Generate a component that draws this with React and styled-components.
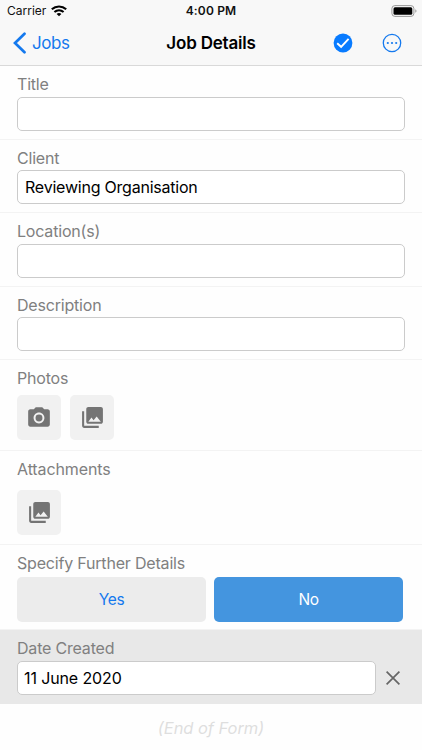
import React from "react";
import styled, { createGlobalStyle } from "styled-components";

const GlobalStyle = createGlobalStyle`
  * { box-sizing: border-box; }
  body { margin: 0; background: #fff; font-family: Inter, "Liberation Sans", sans-serif; }
  button { font: inherit; border: 0; padding: 0; margin: 0; background: none; }
`;

const Screen = styled.div`
  width: 422px;
  height: 750px;
  display: flex;
  flex-direction: column;
  overflow: hidden;
  background: #fefefe;
`;

const Header = styled.header`
  height: 66px;
  flex: none;
  background: #f8f8f8;
  border-bottom: 1px solid #d9d9d9;
`;

const StatusBar = styled.div`
  height: 21px;
  padding: 1px 5px 0 7px;
  display: grid;
  grid-template-columns: 1fr auto 1fr;
  align-items: center;
  font-size: 12px;
  line-height: 20px;
  color: #111;
`;

const Carrier = styled.div`
  display: flex;
  align-items: center;
  gap: 5px;
`;

const Clock = styled.div`
  margin-left: -2px;
  font-weight: 600;
  letter-spacing: 0.15px;
`;

const Battery = styled.svg`
  justify-self: end;
`;

const NavBar = styled.nav`
  height: 44px;
  padding: 0 12px;
  display: grid;
  grid-template-columns: 1fr auto 1fr;
  align-items: center;
`;

const BackButton = styled.button`
  display: flex;
  align-items: center;
  gap: 6px;
  font-size: 17px;
  letter-spacing: -0.4px;
  color: #1479ee;
`;

const NavTitle = styled.h1`
  margin: 0;
  font-size: 17px;
  font-weight: 600;
  letter-spacing: -0.2px;
  color: #000;
`;

const NavActions = styled.div`
  display: flex;
  justify-content: flex-end;
  gap: 29px;
  padding-right: 8px;
`;

const IconButton = styled.button`
  display: flex;
`;

const Field = styled.section`
  flex: none;
  height: ${(p) => p.$height}px;
  padding: 8px ${(p) => p.$right || 17}px 0 17px;
  border-bottom: ${(p) => (p.$active ? "0" : "1px solid #f3f3f3")};
  background: ${(p) => (p.$active ? "#e8e8e8" : "#fefefe")};
`;

const Label = styled.label`
  display: block;
  height: 20px;
  font-size: 16px;
  line-height: 20px;
  letter-spacing: ${(p) => p.$track || "-0.19px"};
  color: #808080;
  white-space: nowrap;
`;

const Controls = styled.div`
  display: flex;
  align-items: center;
  gap: ${(p) => p.$gap || 8}px;
  margin-top: ${(p) => p.$top || 2}px;
`;

const TextBox = styled.div`
  flex: 1;
  height: 34px;
  padding-left: 7px;
  border: 1px solid #cbcbcb;
  border-radius: 5px;
  background: #fff;
  font-size: 16px;
  line-height: 33px;
  letter-spacing: ${(p) => p.$track || "-0.22px"};
  text-indent: ${(p) => p.$indent || 0}px;
  color: #000;
`;

const MediaButton = styled.button`
  width: 44px;
  height: 45px;
  display: grid;
  place-items: center;
  border-radius: 5px;
  background: #f1f1f1;
  color: #747474;
`;

const Choice = styled.button`
  flex: 1;
  height: 45px;
  border-radius: 5px;
  font-size: 15.5px;
  letter-spacing: -0.4px;
  background: ${(p) => (p.$selected ? "#4495df" : "#ececec")};
  color: ${(p) => (p.$selected ? "#fff" : "#1479ee")};
`;

const ClearButton = styled.button`
  width: 18px;
  height: 18px;
  display: grid;
  place-items: center;
`;

const Footer = styled.footer`
  padding-top: 14px;
  text-align: center;
  font-size: 16.5px;
  font-style: italic;
  line-height: 20px;
  letter-spacing: -0.05px;
  color: #dedede;
`;

const CameraIcon = () => (
  <svg width="26" height="26" viewBox="0 0 24 24" fill="currentColor">
    <circle cx="12" cy="12" r="3.2" />
    <path d="M9 2L7.17 4H4c-1.1 0-2 .9-2 2v12c0 1.1.9 2 2 2h16c1.1 0 2-.9 2-2V6c0-1.1-.9-2-2-2h-3.17L15 2H9zm3 15c-2.76 0-5-2.24-5-5s2.24-5 5-5 5 2.24 5 5-2.24 5-5 5z" />
  </svg>
);

const GalleryIcon = () => (
  <svg width="25" height="25" viewBox="0 0 24 24" fill="currentColor">
    <path d="M22 16V4c0-1.1-.9-2-2-2H8c-1.1 0-2 .9-2 2v12c0 1.1.9 2 2 2h12c1.1 0 2-.9 2-2zm-11-4l2.03 2.71L16 11l4 5H8l3-4zM2 6v14c0 1.1.9 2 2 2h14v-2H4V6H2z" />
  </svg>
);

export default function App() {
  return (
    <>
      <GlobalStyle />
      <Screen>
        <Header>
          <StatusBar>
            <Carrier>
              Carrier
              <svg width="16" height="12" viewBox="0 0 16 12" fill="none" stroke="#000" strokeWidth="2.1">
                <path d="M.8 4.3C4.9.5 11.1.5 15.2 4.3" />
                <path d="M3.4 7C6.1 4.7 9.9 4.7 12.6 7" />
                <path d="M5.6 8.9C7 7.7 9 7.7 10.4 8.9L8 11.3Z" fill="#000" stroke="none" />
              </svg>
            </Carrier>
            <Clock>4:00 PM</Clock>
            <Battery width="26" height="12" viewBox="0 0 26 12">
              <rect x=".9" y=".6" width="22" height="10.8" rx="3" fill="none" stroke="#999" />
              <rect x="2.5" y="2.2" width="18.8" height="7.6" rx="1.5" fill="#000" />
              <path d="M24.3 4.3v3.4c.8-.3 1.2-.9 1.2-1.7s-.4-1.4-1.2-1.7z" fill="#999" />
            </Battery>
          </StatusBar>
          <NavBar>
            <BackButton>
              <svg width="14" height="22" viewBox="0 0 14 22" fill="none" stroke="#1479ee" strokeWidth="2.7" strokeLinecap="round">
                <path d="M12.5 1.8L3 11l9.500 9.200" />
              </svg>
              Jobs
            </BackButton>
            <NavTitle>Job Details</NavTitle>
            <NavActions>
              <IconButton aria-label="Save">
                <svg width="20" height="20" viewBox="0 0 20 20">
                  <circle cx="10" cy="10" r="9.4" fill="#087bff" />
                  <path d="M4.2 10.3l3.9 3.5 7.5-8" fill="none" stroke="#fff" strokeWidth="1.9" />
                </svg>
              </IconButton>
              <IconButton aria-label="More">
                <svg width="20" height="20" viewBox="0 0 20 20" fill="#1479ee">
                  <circle cx="10" cy="10" r="8.7" fill="none" stroke="#1479ee" strokeWidth="1.3" />
                  <circle cx="5.8" cy="10" r="1.1" />
                  <circle cx="10" cy="10" r="1.1" />
                  <circle cx="14.2" cy="10" r="1.1" />
                </svg>
              </IconButton>
            </NavActions>
          </NavBar>
        </Header>

        <Field $height={74}>
          <Label>Title</Label>
          <Controls $top={3}><TextBox /></Controls>
        </Field>
        <Field $height={73}>
          <Label>Client</Label>
          <Controls><TextBox>Reviewing Organisation</TextBox></Controls>
        </Field>
        <Field $height={74}>
          <Label>Location(s)</Label>
          <Controls $top={3}><TextBox /></Controls>
        </Field>
        <Field $height={73}>
          <Label>Description</Label>
          <Controls><TextBox /></Controls>
        </Field>
        <Field $height={91}>
          <Label>Photos</Label>
          <Controls $top={7} $gap={9}>
            <MediaButton aria-label="Take photo"><CameraIcon /></MediaButton>
            <MediaButton aria-label="Choose photo"><GalleryIcon /></MediaButton>
          </Controls>
        </Field>
        <Field $height={94}>
          <Label $track="-0.1px">Attachments</Label>
          <Controls $top={11}>
            <MediaButton aria-label="Add attachment"><GalleryIcon /></MediaButton>
          </Controls>
        </Field>
        <Field $height={85} $right={19}>
          <Label>Specify Further Details</Label>
          <Controls $top={4}>
            <Choice>Yes</Choice>
            <Choice $selected>No</Choice>
          </Controls>
        </Field>
        <Field $height={74} $right={20} $active>
          <Label>Date Created</Label>
          <Controls $top={3}>
            <TextBox $indent={-1} $track="-0.12px">11 June 2020</TextBox>
            <ClearButton aria-label="Clear date">
              <svg width="14" height="14" viewBox="0 0 14 14" stroke="#666" strokeWidth="1.7">
                <path d="M.6.6l12.8 12.8M13.4.6L.6 13.4" />
              </svg>
            </ClearButton>
          </Controls>
        </Field>
        <Footer>(End of Form)</Footer>
      </Screen>
    </>
  );
}
